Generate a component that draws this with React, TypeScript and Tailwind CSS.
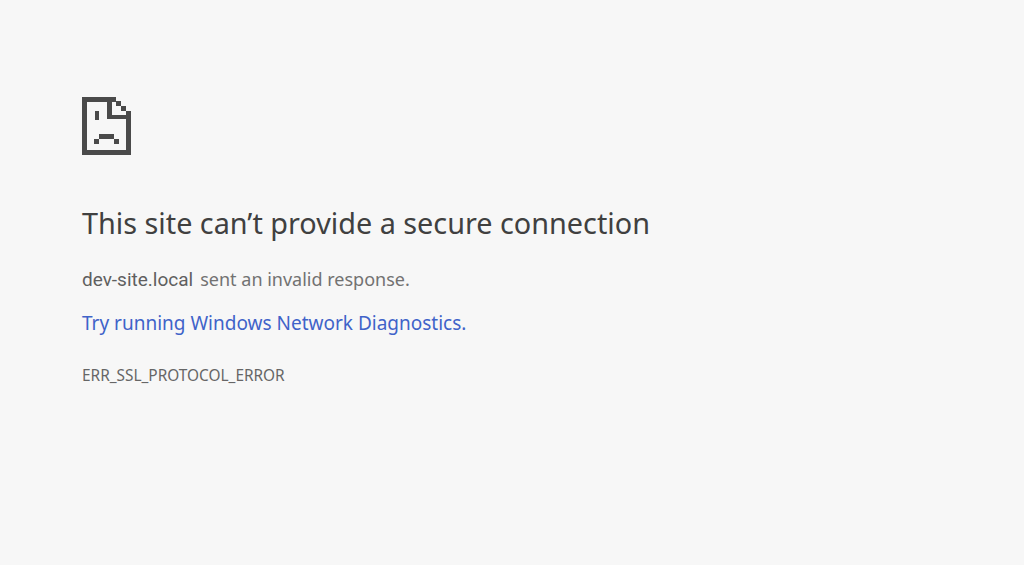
export default function App() {
  return (
    <div className="min-h-[565px] bg-[#f7f7f7] pl-[82px] pt-[97px] font-['Noto_Sans','Open_Sans',sans-serif]">
      {/* sad page icon, drawn on the pixel grid */}
      <svg width="49" height="58" viewBox="0 0 49 58" className="block" fill="#4a4a4a">
        <rect x="0" y="0" width="5" height="58" />
        <rect x="0" y="0" width="34" height="5" />
        <rect x="0" y="53" width="49" height="5" />
        <rect x="44" y="14" width="5" height="44" />
        <rect x="25" y="0" width="5" height="22" />
        <rect x="25" y="18" width="24" height="4" />
        <rect x="34" y="4" width="5" height="5" />
        <rect x="39" y="9" width="5" height="5" />
        <rect x="13" y="14" width="4" height="9" />
        <rect x="17" y="37" width="15" height="5" />
        <rect x="12" y="42" width="5" height="5" />
        <rect x="32" y="42" width="5" height="5" />
      </svg>
      <h1 className="mt-[48px] text-[28.8px] leading-[40px] font-normal text-[#404040]">
        This site can’t provide a secure connection
      </h1>
      <p className="mt-[24px] flex items-baseline text-[18px] leading-[24px] text-[#727272]">
        <span className="mr-[7px] font-['Roboto',sans-serif] text-[19px] text-[#5f5f5f]">dev-site.local</span>
        sent an invalid response.
      </p>
      <a className="mt-[18px] block text-[19px] leading-[26px] text-[#3f63c9]">
        Try running Windows Network Diagnostics.
      </a>
      <p className="mt-[30px] text-[15.4px] leading-[20px] text-[#666666]">ERR_SSL_PROTOCOL_ERROR</p>
    </div>
  )
}
